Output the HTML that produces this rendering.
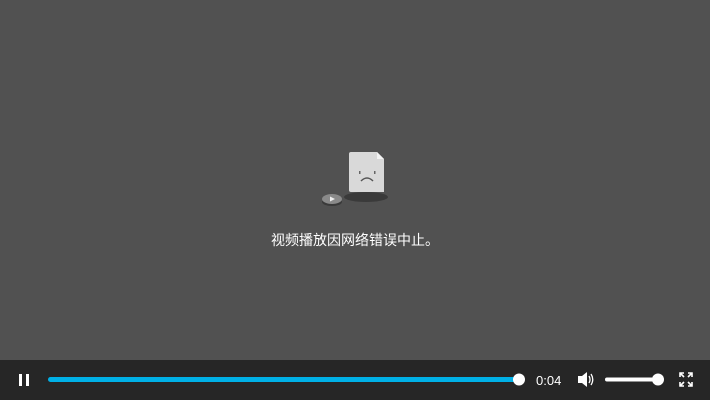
<!DOCTYPE html>
<html><head><meta charset="utf-8"><style>
body{margin:0;width:710px;height:400px;background:#515151;position:relative;overflow:hidden;font-family:"Liberation Sans","Noto Sans CJK SC",sans-serif}
.bar{position:absolute;left:0;top:360px;width:710px;height:40px;background:#262626}
.bar svg{display:block}
.msg{position:absolute;left:0;width:710px;top:230px;text-align:center;color:#fff;font-size:14px}
</style></head><body>
<svg style="position:absolute;left:0;top:0" width="710" height="360">
<ellipse cx="332" cy="202" rx="10" ry="4" fill="#3a3a3a"/>
<ellipse cx="332" cy="199" rx="10" ry="5" fill="#8a8a8a"/>
<polygon points="330,196.5 330,201.5 335,199" fill="#eee"/>
<ellipse cx="366" cy="197" rx="22" ry="5" fill="#3a3a3a"/>
<path d="M351 152 H377 L384 159 V192 H351 Q349 192 349 190 V154 Q349 152 351 152Z" fill="#d9d9d9"/>
<path d="M377 152 V159 H384Z" fill="#f3f3f3"/>
<rect x="359" y="171" width="1.5" height="3" fill="#666"/>
<rect x="374" y="171" width="1.5" height="3" fill="#666"/>
<path d="M361 181 Q367 175 373 181" stroke="#555" stroke-width="1.5" fill="none"/>
</svg>
<div class="msg">视频播放因网络错误中止。</div>
<div class="bar">
<svg width="710" height="40">
<rect x="19" y="14" width="3" height="12" fill="#fff"/><rect x="26" y="14" width="3" height="12" fill="#fff"/>
<rect x="48" y="17" width="472" height="5" rx="2.5" fill="#00b0e6"/>
<circle cx="519" cy="19.5" r="6" fill="#fff"/>
<text x="536" y="25" fill="#fff" font-size="13" font-family="Liberation Sans">0:04</text>
<path d="M578 16 H582 L587 12 V27 L582 23 H578Z" fill="#fff"/>
<path d="M589 16 Q591 19.5 589 23 M591 14 Q594.5 19.5 591 25" stroke="#fff" stroke-width="1.3" fill="none"/>
<rect x="605" y="17.5" width="54" height="4" rx="2" fill="#fff"/>
<circle cx="658" cy="19.5" r="6" fill="#fff"/>
<g stroke="#fff" stroke-width="1.6" fill="none">
<path d="M680 17 V13 H684 M680 13 L684 17 M688 13 H692 V17 M692 13 L688 17 M680 22 V26 H684 M680 26 L684 22 M688 26 H692 V22 M692 26 L688 22"/>
</g>
</svg>
</div>
</body></html>
